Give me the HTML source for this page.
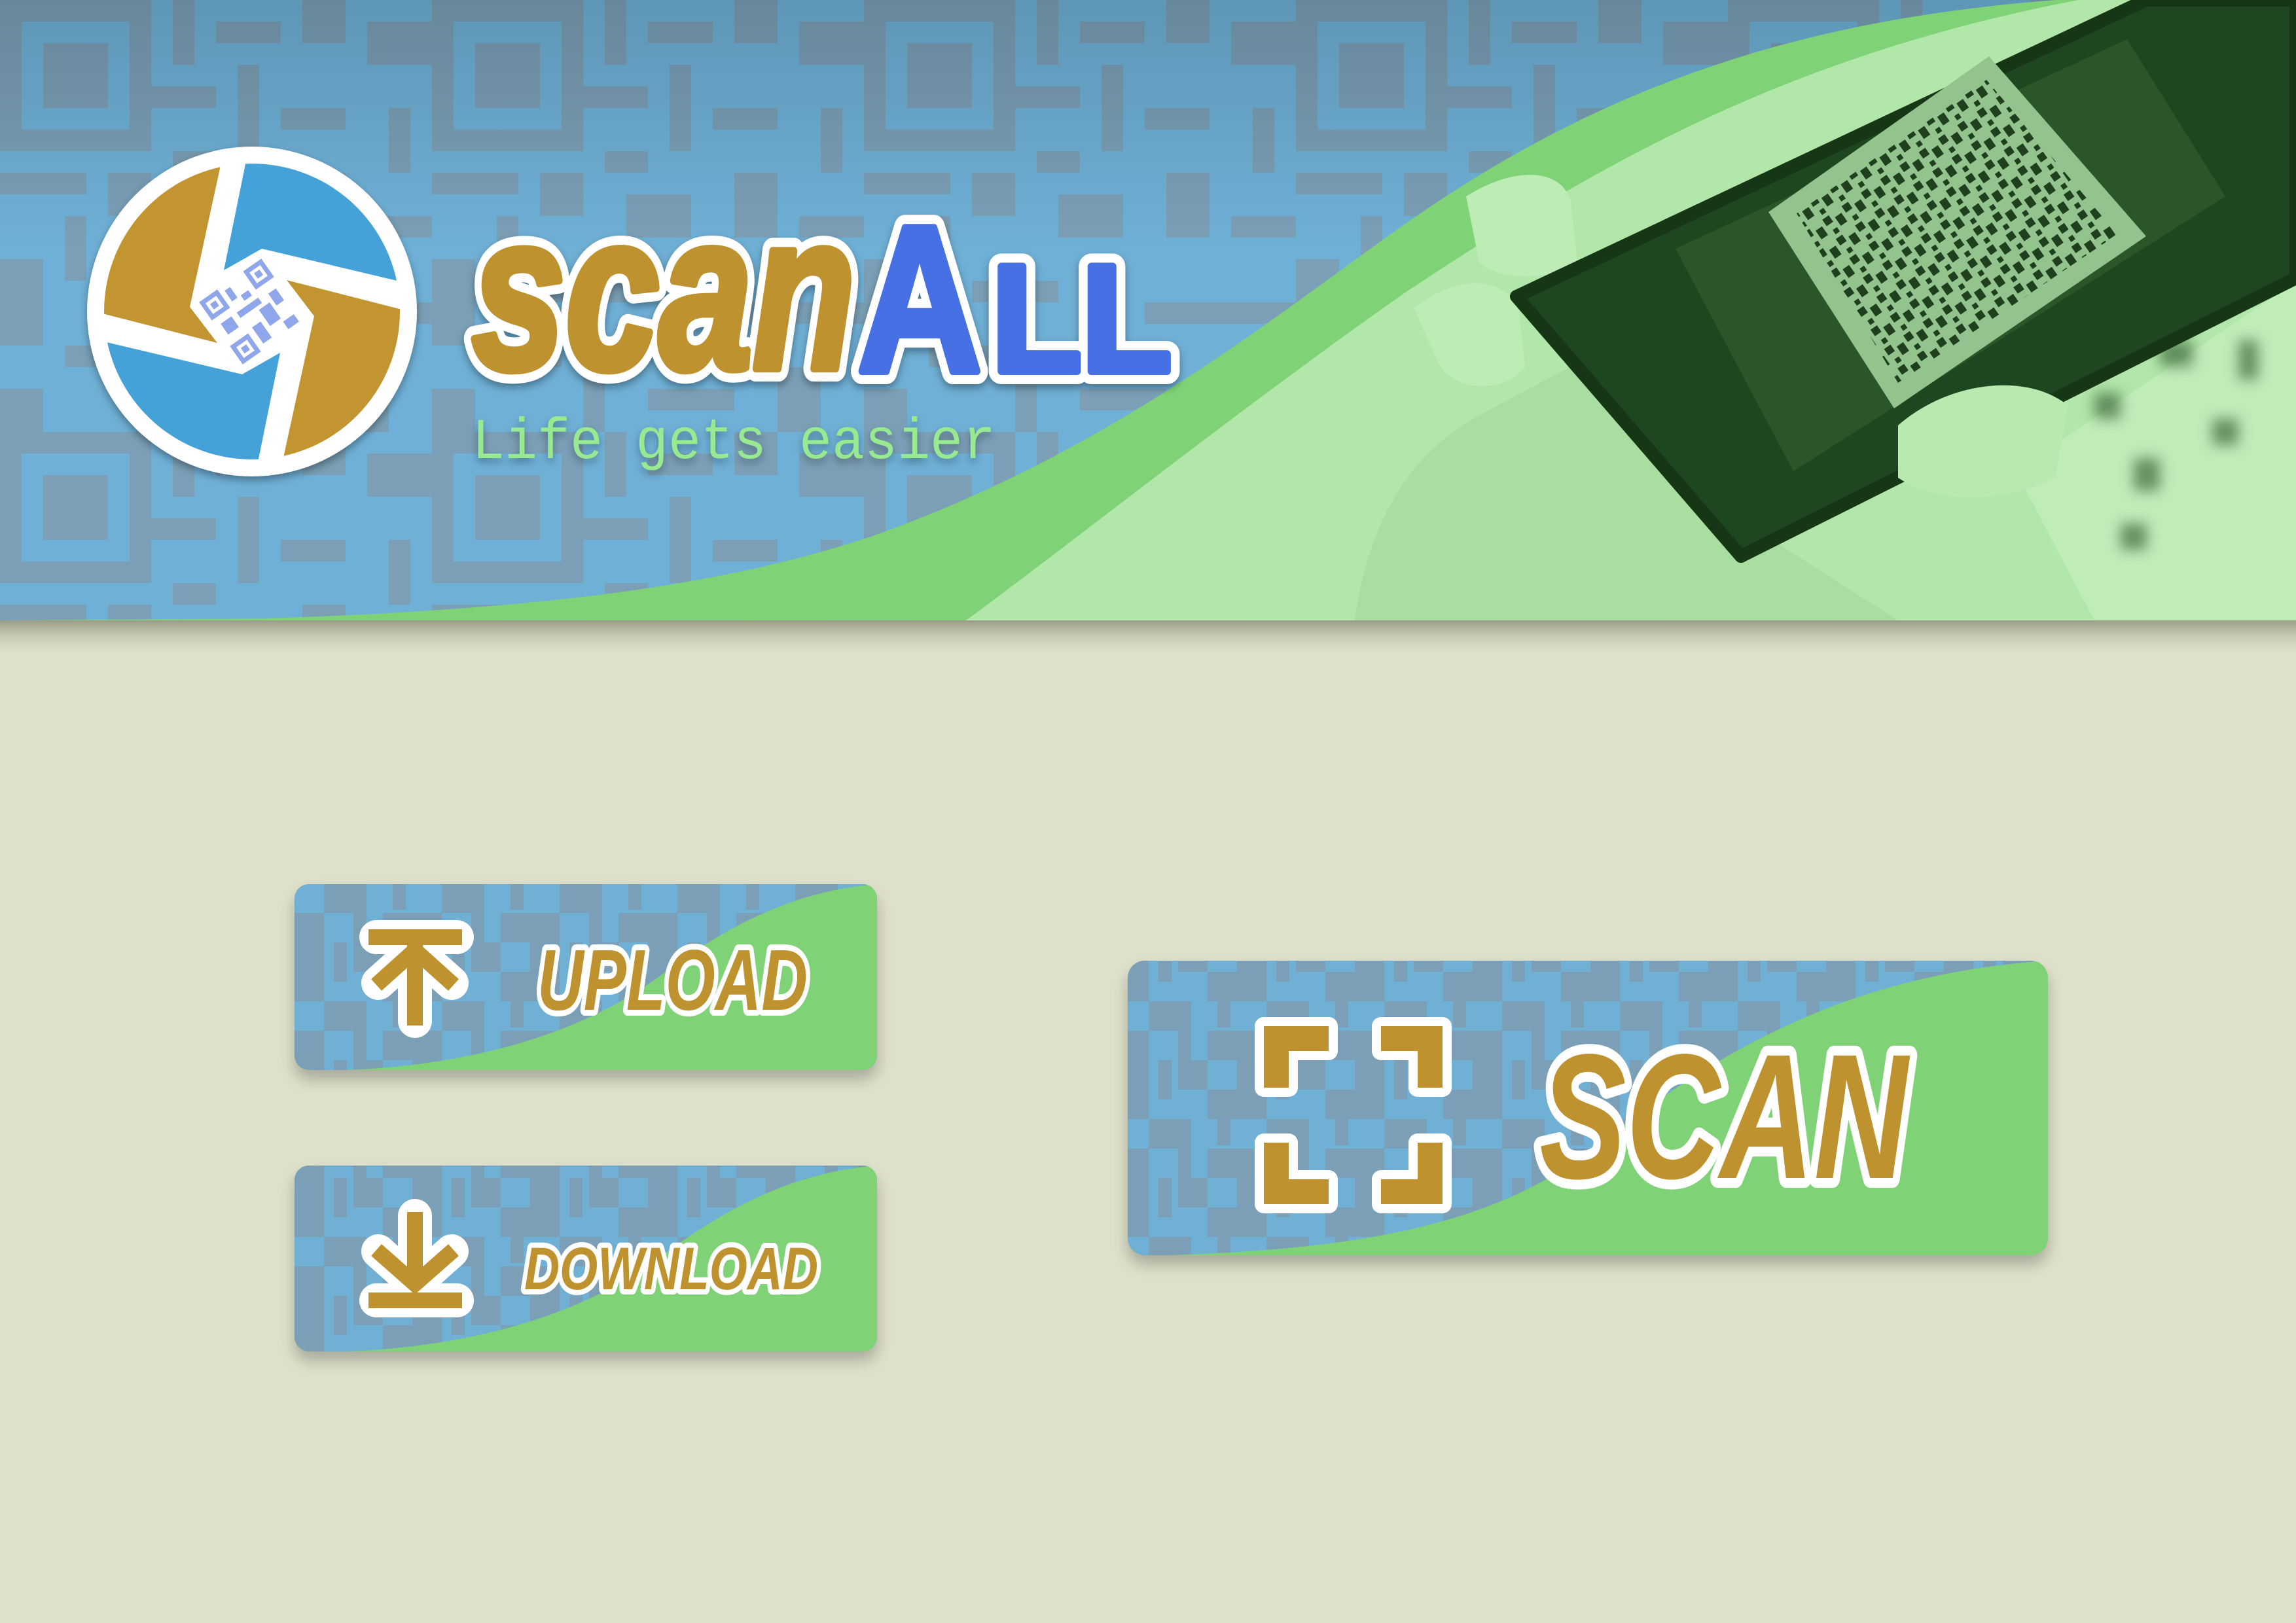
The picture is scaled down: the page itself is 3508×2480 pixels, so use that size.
<!DOCTYPE html>
<html><head><meta charset="utf-8"><style>
html,body{margin:0;padding:0;background:#dfe1cc;}
svg{display:block}
</style></head><body>
<svg width="3508" height="2480" viewBox="0 0 3508 2480" xmlns="http://www.w3.org/2000/svg">
<defs>
<pattern id="qr" width="660" height="660" patternUnits="userSpaceOnUse">
<rect width="660" height="660" fill="#6fb0d6"/>
<g fill="#7a9fb6">
<rect x="0" y="0" width="231" height="231"/>
<rect x="264" y="0" width="33" height="99"/><rect x="330" y="33" width="99" height="33"/>
<rect x="462" y="0" width="66" height="66"/><rect x="561" y="33" width="99" height="66"/>
<rect x="231" y="132" width="99" height="33"/><rect x="363" y="99" width="33" height="132"/>
<rect x="429" y="165" width="99" height="33"/><rect x="594" y="165" width="33" height="99"/>
<rect x="0" y="264" width="132" height="33"/><rect x="165" y="264" width="66" height="66"/>
<rect x="264" y="231" width="66" height="33"/><rect x="99" y="330" width="33" height="99"/>
<rect x="297" y="297" width="99" height="66"/><rect x="462" y="264" width="66" height="99"/>
<rect x="561" y="330" width="99" height="33"/><rect x="0" y="396" width="66" height="132"/>
<rect x="165" y="429" width="132" height="33"/><rect x="363" y="429" width="33" height="99"/>
<rect x="429" y="462" width="231" height="33"/><rect x="99" y="528" width="99" height="33"/>
<rect x="231" y="561" width="33" height="99"/><rect x="330" y="594" width="132" height="33"/>
<rect x="528" y="561" width="66" height="99"/><rect x="0" y="594" width="66" height="66"/>
</g>
<rect x="33" y="33" width="165" height="165" fill="#6fb0d6"/>
<rect x="66" y="66" width="99" height="99" fill="#7a9fb6"/>
</pattern>
<pattern id="qrb" width="180" height="180" patternUnits="userSpaceOnUse">
<rect width="180" height="180" fill="#70b0d5"/>
<g fill="#7a9fb6">
<rect x="0" y="0" width="45" height="45"/><rect x="90" y="0" width="45" height="90"/>
<rect x="45" y="45" width="45" height="45"/><rect x="0" y="90" width="20" height="90"/>
<rect x="45" y="135" width="90" height="45"/><rect x="135" y="90" width="45" height="45"/>
<rect x="60" y="90" width="20" height="40"/><rect x="150" y="0" width="20" height="60"/>
</g>
</pattern>
<pattern id="scr" width="36" height="36" patternUnits="userSpaceOnUse" patternTransform="rotate(-35)">
<rect width="36" height="36" fill="#93c48d"/>
<rect x="0" y="0" width="12" height="12" fill="#1f3f1e"/><rect x="18" y="8" width="12" height="16" fill="#1f3f1e"/><rect x="4" y="22" width="8" height="8" fill="#1f3f1e"/>
</pattern>
<linearGradient id="topg" x1="0" y1="0" x2="0" y2="1">
<stop offset="0" stop-color="#000" stop-opacity="0.15"/><stop offset="0.4" stop-color="#000" stop-opacity="0"/>
</linearGradient>
<linearGradient id="sh" x1="0" y1="0" x2="0" y2="1">
<stop offset="0" stop-color="#8a8a78" stop-opacity="0.8"/><stop offset="1" stop-color="#dfe1cc" stop-opacity="0"/>
</linearGradient>
<filter id="ds" x="-10%" y="-10%" width="120%" height="130%"><feDropShadow dx="0" dy="14" stdDeviation="12" flood-color="#000" flood-opacity="0.25"/></filter>
<filter id="ds2"><feDropShadow dx="0" dy="6" stdDeviation="6" flood-color="#000" flood-opacity="0.35"/></filter>
<filter id="blur"><feGaussianBlur stdDeviation="10"/></filter>
<clipPath id="lc"><circle cx="385" cy="476" r="226"/></clipPath>
<clipPath id="b1"><rect x="450" y="1351" width="890" height="284" rx="22"/></clipPath>
<clipPath id="b2"><rect x="450" y="1781" width="890" height="284" rx="22"/></clipPath>
<clipPath id="b3"><rect x="1723" y="1468" width="1406" height="450" rx="26"/></clipPath>
</defs>

<!-- banner -->
<rect x="0" y="948" width="3508" height="60" fill="url(#sh)"/>
<rect x="0" y="0" width="3508" height="948" fill="#80d277"/>
<path d="M0,948 L400,945 C900,930 1150,880 1330,820 C1700,690 1950,480 2150,340 C2450,130 2750,30 3140,0 H0Z" fill="url(#qr)"/>
<path d="M0,948 L400,945 C900,930 1150,880 1330,820 C1700,690 1950,480 2150,340 C2450,130 2750,30 3140,0 H0Z" fill="url(#topg)"/>
<!-- photo -->
<path d="M1476,948 C1650,820 1900,620 2147,447 C2400,280 2700,90 3176,0 H3508 V948Z" fill="#b2e7aa"/>
<path d="M2070,948 C2090,800 2150,700 2250,640 L2400,560 C2500,700 2700,820 2900,948Z" fill="#a5dc9c" opacity="0.8"/>
<path d="M3080,720 L3508,430 V948 H3200Z" fill="#c0ecb8"/>
<g fill="#3d6a3a" filter="url(#blur)" opacity="0.7"><rect x="3200" y="600" width="40" height="40"/><rect x="3300" y="520" width="50" height="40"/><rect x="3260" y="700" width="40" height="50"/><rect x="3380" y="640" width="40" height="40"/><rect x="3420" y="520" width="30" height="60"/><rect x="3240" y="800" width="40" height="40"/></g>
<path d="M2160,470 C2230,420 2290,420 2320,470 L2330,560 C2300,600 2230,600 2200,560Z" fill="#bdecb4"/>
<path d="M2240,300 C2320,250 2390,260 2400,310 L2410,400 C2370,430 2290,430 2260,400Z" fill="#bdecb4"/>
<path d="M2317,453 L3279,0 L3508,0 L3508,425 L2660,850 Z" fill="#1e4620" stroke="#163616" stroke-width="20" stroke-linejoin="round"/>
<path d="M2560,380 L3250,60 L3400,300 L2740,720Z" fill="#2a5629"/>
<path d="M2702,324 L3039,86 L3279,361 L2894,624Z" fill="#93c48d"/>
<path d="M2745,326 L3035,122 L3235,358 L2900,585Z" fill="url(#scr)"/>
<path d="M2900,650 C2980,580 3100,570 3160,620 L3140,730 C3060,770 2960,770 2900,730Z" fill="#b8eab0"/>

<!-- logo -->
<circle cx="385" cy="476" r="252" fill="#fff" filter="url(#ds2)"/>
<g clip-path="url(#lc)">
<g transform="translate(385,476)">
<polygon points="-53,48 -260,-5 -260,-260 -40,-260 -95,-7" fill="#c29530"/>
<polygon points="53,-48 260,5 260,260 40,260 95,7" fill="#c29530"/>
<polygon points="-43,-63 -3,-260 260,-260 260,-38 15,-96" fill="#45a2d8"/>
<polygon points="43,63 3,260 -260,260 -260,38 -15,96" fill="#45a2d8"/>
</g>
</g>
<g transform="translate(385,476) rotate(-35)">
<g fill="#8fa6ea">
<rect x="-58" y="-58" width="34" height="34"/><rect x="24" y="-58" width="34" height="34"/><rect x="-58" y="24" width="34" height="34"/>
<rect x="-16" y="-50" width="10" height="20"/><rect x="0" y="-30" width="14" height="10"/><rect x="-20" y="-12" width="40" height="10"/><rect x="-50" y="-12" width="20" height="20"/><rect x="10" y="4" width="20" height="30"/><rect x="-14" y="20" width="16" height="30"/><rect x="36" y="-8" width="14" height="22"/><rect x="30" y="40" width="20" height="14"/>
</g>
<g fill="#fff"><rect x="-51" y="-51" width="20" height="20"/><rect x="31" y="-51" width="20" height="20"/><rect x="-51" y="31" width="20" height="20"/></g>
<g fill="#8fa6ea"><rect x="-46" y="-46" width="10" height="10"/><rect x="36" y="-46" width="10" height="10"/><rect x="-46" y="36" width="10" height="10"/></g>
</g>

<!-- wordmark: white outline layer -->
<g filter="url(#ds2)" stroke="#fff" stroke-width="40" stroke-linejoin="round" fill="#fff" font-family="Liberation Sans, sans-serif" font-weight="bold">
<text x="721" y="563" font-style="italic" font-size="340" textLength="586" lengthAdjust="spacingAndGlyphs">scan</text>
<text x="1310" y="567" font-size="318" textLength="190" lengthAdjust="spacingAndGlyphs">A</text>
<text x="1515" y="567" font-size="232" textLength="275" lengthAdjust="spacingAndGlyphs">LL</text>
</g>
<g stroke-width="12" stroke-linejoin="round" font-family="Liberation Sans, sans-serif" font-weight="bold">
<text x="721" y="563" font-style="italic" font-size="340" textLength="586" lengthAdjust="spacingAndGlyphs" fill="#bf9230" stroke="#bf9230">scan</text>
<text x="1310" y="567" font-size="318" textLength="190" lengthAdjust="spacingAndGlyphs" fill="#4670e4" stroke="#4670e4">A</text>
<text x="1515" y="567" font-size="232" textLength="275" lengthAdjust="spacingAndGlyphs" fill="#4670e4" stroke="#4670e4">LL</text>
</g>
<text x="721" y="700" font-family="Liberation Mono, monospace" font-size="88" textLength="800" lengthAdjust="spacingAndGlyphs" fill="#98ea90" filter="url(#ds2)">Life gets easier</text>

<!-- UPLOAD button -->
<g filter="url(#ds)"><rect x="450" y="1351" width="890" height="284" rx="22" fill="#80d277"/></g>
<g clip-path="url(#b1)">
<rect x="450" y="1351" width="890" height="284" fill="url(#qrb)"/>
<path d="M530,1635 C780,1625 930,1550 1010,1490 C1130,1400 1230,1360 1340,1351 V1635Z" fill="#80d277"/>
</g>
<g stroke="#fff" stroke-width="52" stroke-linejoin="round" stroke-linecap="round" fill="none">
<path d="M575,1432 H698 M634,1442 V1560 M578,1502 L634,1452 L690,1502"/>
</g>
<g stroke="#bf9230" stroke-width="24" fill="none">
<path d="M563,1432 H706 M634,1442 V1567 M575,1505 L634,1452 L693,1505"/>
</g>
<text x="821" y="1543" font-family="Liberation Sans Narrow, Liberation Sans, sans-serif" font-weight="bold" font-style="italic" font-size="132" textLength="413" lengthAdjust="spacingAndGlyphs" fill="#bf9230" stroke="#fff" stroke-width="18" paint-order="stroke" stroke-linejoin="round">UPLOAD</text>

<!-- DOWNLOAD button -->
<g filter="url(#ds)"><rect x="450" y="1781" width="890" height="284" rx="22" fill="#80d277"/></g>
<g clip-path="url(#b2)">
<rect x="450" y="1781" width="890" height="284" fill="url(#qrb)"/>
<path d="M530,2065 C780,2055 930,1980 1010,1920 C1130,1830 1230,1790 1340,1781 V2065Z" fill="#80d277"/>
</g>
<g stroke="#fff" stroke-width="52" stroke-linejoin="round" stroke-linecap="round" fill="none">
<path d="M575,1987 H698 M634,1858 V1960 M578,1912 L634,1962 L690,1912"/>
</g>
<g stroke="#bf9230" stroke-width="24" fill="none">
<path d="M563,1987 H706 M634,1852 V1962 M575,1910 L634,1962 L693,1910"/>
</g>
<text x="801" y="1970" font-family="Liberation Sans Narrow, Liberation Sans, sans-serif" font-weight="bold" font-style="italic" font-size="92" textLength="449" lengthAdjust="spacingAndGlyphs" fill="#bf9230" stroke="#fff" stroke-width="16" paint-order="stroke" stroke-linejoin="round">DOWNLOAD</text>

<!-- SCAN button -->
<g filter="url(#ds)"><rect x="1723" y="1468" width="1406" height="450" rx="26" fill="#80d277"/></g>
<g clip-path="url(#b3)">
<rect x="1723" y="1468" width="1406" height="450" fill="url(#qrb)"/>
<path d="M1783,1918 C2123,1908 2303,1858 2443,1748 C2623,1608 2823,1488 3129,1468 V1918Z" fill="#80d277"/>
</g>
<g fill="#bf9230" stroke="#fff" stroke-width="28" stroke-linejoin="round" paint-order="stroke">
<path d="M1931,1568 H2030 V1606 H1969 V1662 H1931Z"/>
<path d="M2204,1568 H2110 V1606 H2166 V1662 H2204Z"/>
<path d="M1931,1840 H2030 V1802 H1969 V1746 H1931Z"/>
<path d="M2204,1840 H2110 V1802 H2166 V1746 H2204Z"/>
</g>
<text x="2352" y="1800" font-family="Liberation Sans Narrow, Liberation Sans, sans-serif" font-weight="bold" font-style="italic" font-size="272" textLength="563" lengthAdjust="spacingAndGlyphs" fill="#bf9230" stroke="#fff" stroke-width="30" paint-order="stroke" stroke-linejoin="round">SCAN</text>
</svg>
</body></html>
